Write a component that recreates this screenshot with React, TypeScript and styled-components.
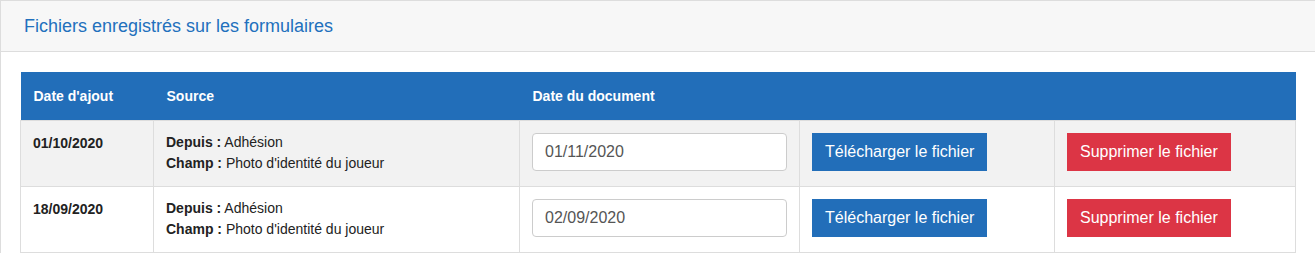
import React from "react";
import styled, {createGlobalStyle} from "styled-components";

interface FileRow {
    addedOn: string;
    from: string;
    field: string;
    documentDate: string;
}

const rows: FileRow[] = [
    {addedOn: "01/10/2020", from: "Adhésion", field: "Photo d'identité du joueur", documentDate: "01/11/2020"},
    {addedOn: "18/09/2020", from: "Adhésion", field: "Photo d'identité du joueur", documentDate: "02/09/2020"},
];

// widths of the columns, in px
const columns = [133, 366, 280, 255, 241];

const App: React.FC = () => {
    return (
        <>
            <GlobalStyle/>
            <Panel>
                <PanelHeading>Fichiers enregistrés sur les formulaires</PanelHeading>
                <PanelBody>
                    <Table>
                        <colgroup>
                            {columns.map((w, i) => (
                                <col key={i} style={{width: w}}/>
                            ))}
                        </colgroup>
                        <thead>
                        <tr>
                            <HeadCell>Date d'ajout</HeadCell>
                            <HeadCell>Source</HeadCell>
                            <HeadCell>Date du document</HeadCell>
                            <HeadCell/>
                            <HeadCell/>
                        </tr>
                        </thead>
                        <tbody>
                        {rows.map((row, i) => (
                            <Row key={i} $striped={i % 2 === 0}>
                                <DateCell>{row.addedOn}</DateCell>
                                <SourceCell>
                                    <div><b>Depuis :</b> {row.from}</div>
                                    <div><b>Champ :</b> {row.field}</div>
                                </SourceCell>
                                <Cell>
                                    <DateInput type="text" defaultValue={row.documentDate}/>
                                </Cell>
                                <Cell>
                                    <Button $variant="primary">Télécharger le fichier</Button>
                                </Cell>
                                <Cell>
                                    <Button $variant="danger">Supprimer le fichier</Button>
                                </Cell>
                            </Row>
                        ))}
                        </tbody>
                    </Table>
                </PanelBody>
            </Panel>
        </>
    );
}

const GlobalStyle = createGlobalStyle`
  body {
    margin: 0;
    background: #fff;
    font-family: "Liberation Sans", Arial, Helvetica, sans-serif;
    color: #333;
  }
`

const Panel = styled.div`
  border-top: 1px solid #ddd;
  border-left: 1px solid #ddd;
  background: #fff;
`

const PanelHeading = styled.div`
  background: #f7f7f7;
  border-bottom: 1px solid #ddd;
  padding: 14px 23px 14px 23px;
  height: 22px;
  line-height: 22px;
  font-size: 18px;
  color: #2270bd;
`

const PanelBody = styled.div`
  padding: 20px 20px 0 19px;
`

const Table = styled.table`
  width: 1275px;
  table-layout: fixed;
  border-collapse: collapse;
  font-size: 14px;
`

const HeadCell = styled.th`
  background: #226eb9;
  color: #fff;
  height: 48px;
  padding: 0 13px;
  text-align: left;
  font-weight: bold;
  font-size: 14px;
  vertical-align: middle;
`

const Row = styled.tr<{ $striped: boolean }>`
  background: ${p => p.$striped ? "#f2f2f2" : "#fff"};
`

const Cell = styled.td`
  border: 1px solid #ddd;
  padding: 12px 12px 15px 12px;
  vertical-align: top;
`

const DateCell = styled(Cell)`
  font-weight: bold;
  color: #222;
  line-height: 20px;
  padding-top: 12px;
  padding-bottom: 0;
`

const SourceCell = styled(Cell)`
  line-height: 21px;
  color: #222;
  padding-top: 11px;
  padding-bottom: 0;

  b {
    font-weight: bold;
  }
`

const DateInput = styled.input`
  box-sizing: border-box;
  width: 255px;
  height: 38px;
  padding: 0 12px;
  border: 1px solid #ccc;
  border-radius: 4px;
  background: #fff;
  font-family: "Liberation Sans", Arial, sans-serif;
  font-size: 16px;
  color: #555;
  display: block;
`

const Button = styled.button<{ $variant: "primary" | "danger" }>`
  height: 38px;
  padding: 0 13px;
  border: none;
  border-radius: 0;
  background: ${p => p.$variant === "primary" ? "#226eb9" : "#dc3545"};
  color: #fff;
  font-family: "Liberation Sans", Arial, sans-serif;
  font-size: 16px;
  cursor: pointer;
  display: block;
`

export default App;
